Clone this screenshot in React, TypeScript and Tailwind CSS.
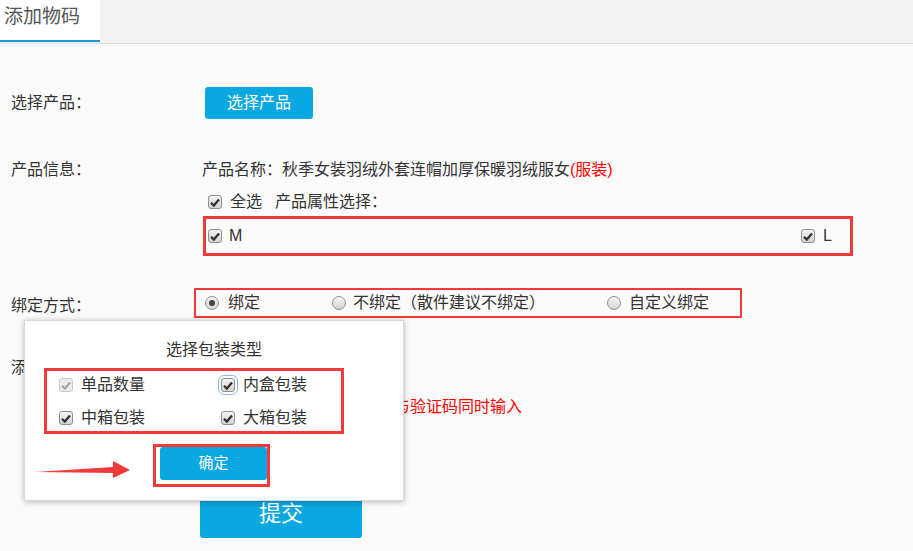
import React from "react";

const FONT = { fontFamily: '"Liberation Sans", "Noto Sans CJK SC", sans-serif' };

function Check({ disabled = false, focus = false }: { disabled?: boolean; focus?: boolean }) {
  return (
    <span
      className={`inline-flex shrink-0 items-center justify-center w-[14px] h-[14px] rounded-[3px] border ${
        disabled ? "border-[#c8c8c8] bg-[#ececec]" : "border-[#8f8f8f] bg-gradient-to-b from-[#f4f4f4] to-[#d3d3d3]"
      } ${focus ? "outline outline-[1.5px] outline-[#8fb6f0] outline-offset-[2px]" : ""}`}
    >
      <svg width="10" height="9" viewBox="0 0 10 9">
        <path d="M1 4.8 L3.8 7.6 L9 1.4" fill="none" stroke={disabled ? "#a8a8a8" : "#333"} strokeWidth="2.3" />
      </svg>
    </span>
  );
}

function Radio({ on = false }: { on?: boolean }) {
  return (
    <span className="inline-flex shrink-0 items-center justify-center w-[14px] h-[14px] rounded-full border border-[#8f8f8f] bg-gradient-to-b from-[#f6f6f6] to-[#d4d4d4]">
      {on && <span className="w-[6px] h-[6px] rounded-full bg-[#444]" />}
    </span>
  );
}

export default function App() {
  return (
    <div
      className="relative w-[913px] h-[551px] overflow-hidden bg-[#fbfbfb] text-[16px] text-[#333] [text-spacing-trim:space-all]"
      style={FONT}
    >
      {/* tab bar */}
      <div className="h-[44px] bg-[#f2f2f2] border-b border-[#dcdcdc] flex">
        <div className="w-[100px] h-[42px] bg-white border-b-2 border-[#1a9ad6] pl-[4px] pt-[3px] text-[19px] leading-[28px] text-[#555]">
          添加物码
        </div>
      </div>

      {/* row: select product */}
      <div className="flex items-center mt-[43px] h-[32px]">
        <div className="w-[202px] pl-[11px]">选择产品：</div>
        <button className="ml-[3px] w-[108px] h-[32px] rounded-[3px] bg-[#09a8e0] text-white text-[16px]">选择产品</button>
      </div>

      {/* row: product info */}
      <div className="flex mt-[41px]">
        <div className="w-[202px] pl-[11px] leading-[20px]">产品信息：</div>
        <div className="flex flex-col">
          <div className="leading-[20px]">
            产品名称：秋季女装羽绒外套连帽加厚保暖羽绒服女<span className="text-[#f00]">(服装)</span>
          </div>
          <div className="flex items-center h-[20px] mt-[12px] pl-[6px] leading-[20px]">
            <Check />
            <span className="ml-[8px]">全选</span>
            <span className="ml-[13px]">产品属性选择：</span>
          </div>
          <div className="mt-[4px] ml-[1px] w-[650px] h-[40px] border-[3px] border-[#f23a3a] flex items-center justify-between pl-[2px] pr-[18px]">
            <div className="flex items-center">
              <Check />
              <span className="ml-[7px]">M</span>
            </div>
            <div className="flex items-center">
              <Check />
              <span className="ml-[8px]">L</span>
            </div>
          </div>
        </div>
      </div>

      {/* row: binding */}
      <div className="flex mt-[32px]">
        <div className="w-[194px] pl-[11px] pt-[8px] leading-[20px]">绑定方式：</div>
        <div className="w-[548px] h-[30px] border-[2.5px] border-[#f23a3a] flex items-center pl-[9px]">
          <Radio on />
          <span className="ml-[9px] w-[104px]">绑定</span>
          <Radio />
          <span className="ml-[7px] w-[254px]">不绑定（散件建议不绑定）</span>
          <Radio />
          <span className="ml-[8px]">自定义绑定</span>
        </div>
      </div>

      {/* row: add quantity (mostly covered by the popup) */}
      <div className="flex mt-[40px]">
        <div className="w-[202px] pl-[11px] leading-[20px]">添加数量：</div>
        <div className="flex flex-col">
          <div className="w-[180px] h-[28px] border border-[#ccc] bg-white" />
          <div className="mt-[11px] leading-[20px] text-[#f00]">提示：数量填写正确，物码与验证码同时输入</div>
        </div>
      </div>

      <div className="mt-[78px] ml-[200px] w-[162px] h-[43px] rounded-[3px] bg-[#09a8e0] text-white text-[22px] leading-[30px] flex items-start justify-center pt-[4px]">
        提交
      </div>

      {/* popup */}
      <div className="absolute left-[24px] top-[320px] w-[380px] h-[181px] bg-white border border-[#d8d8d8] shadow-[0_1px_6px_rgba(0,0,0,0.28)] flex flex-col">
        <div className="mt-[19px] leading-[20px] text-center">选择包装类型</div>
        <div className="mt-[8px] ml-[19px] w-[300px] h-[66px] border-[3px] border-[#f23a3a] grid grid-cols-[162px_1fr] content-start pt-[4px] gap-y-[13px] pl-[12px]">
          <div className="flex items-center h-[20px]">
            <Check disabled />
            <span className="ml-[8px]">单品数量</span>
          </div>
          <div className="flex items-center h-[20px]">
            <Check focus />
            <span className="ml-[8px]">内盒包装</span>
          </div>
          <div className="flex items-center h-[20px]">
            <Check />
            <span className="ml-[8px]">中箱包装</span>
          </div>
          <div className="flex items-center h-[20px]">
            <Check />
            <span className="ml-[8px]">大箱包装</span>
          </div>
        </div>
        <div className="mt-[10px] ml-[128px] w-[117px] h-[43px] border-[3px] border-[#f23a3a] pl-[4px]">
          <button className="w-[107px] h-[33px] rounded-[3px] bg-[#09a8e0] text-white text-[15px]">确定</button>
        </div>
        <svg className="absolute left-[9px] top-[137px]" width="100" height="22" viewBox="0 0 100 22">
          <polygon points="1,14 79,9 79,3 96,12 79,20 79,15" fill="#f23a3a" />
        </svg>
      </div>
    </div>
  );
}
